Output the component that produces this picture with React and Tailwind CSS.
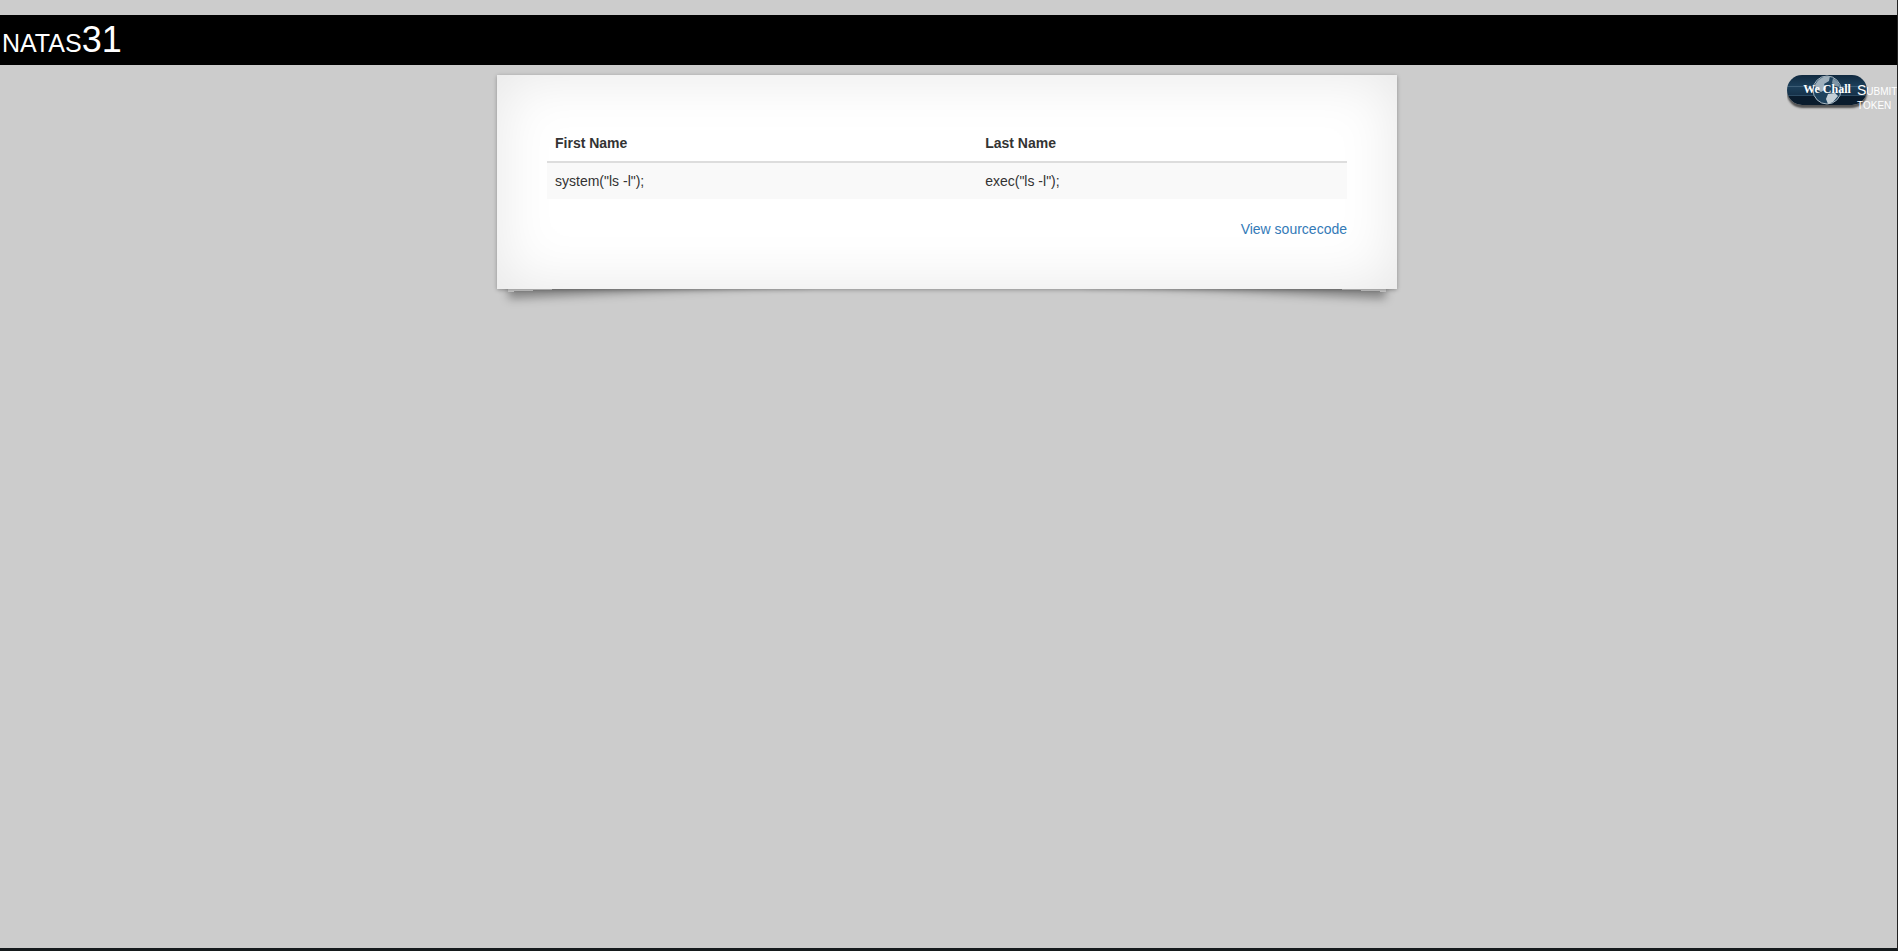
export default function App() {
  return (
    <div className="isolate relative flex h-[951px] flex-col overflow-hidden border-r border-b-[3px] border-r-[#222222] border-b-[#151a1c] bg-[#cccccc] pt-[15px] font-['Liberation_Sans',Arial,sans-serif] text-sm leading-5 text-[#333333]">
      <h1 className="h-[50px] bg-black pl-[2px] text-[36px] leading-[50px] font-normal text-white [font-variant:small-caps]">natas31</h1>

      <main className="flex justify-center pt-[10px] pr-[3px]">
        <div className="relative w-[900px] bg-white p-[50px] shadow-[0_1px_4px_rgba(0,0,0,0.3),inset_0_0_60px_rgba(0,0,0,0.1)]">
          {/* lifted corners */}
          <div className="absolute bottom-[5px] left-[10px] -z-10 h-[20%] w-1/2 max-w-[300px] -rotate-3 shadow-[0_7px_10px_rgba(0,0,0,0.35)]"></div>
          <div className="absolute right-[10px] bottom-[5px] -z-10 h-[20%] w-1/2 max-w-[300px] rotate-3 shadow-[0_7px_10px_rgba(0,0,0,0.35)]"></div>

          <table className="mb-5 w-full border-collapse">
            <thead>
              <tr className="border-b-2 border-[#dddddd]">
                <th className="p-2 text-left font-bold">First Name</th>
                <th className="p-2 text-left font-bold">Last Name</th>
              </tr>
            </thead>
            <tbody>
              <tr className="bg-[#f9f9f9]">
                <td className="p-2">system("ls -l");</td>
                <td className="p-2">exec("ls -l");</td>
              </tr>
            </tbody>
          </table>
          <div className="text-right">
            <a href="#" className="text-[#337ab7]">View sourcecode</a>
          </div>
        </div>
      </main>

      {/* wechall badge */}
      <div className="absolute top-[75px] right-0 flex h-[40px] w-[110px] items-start overflow-hidden">
        <div className="relative flex h-[30px] w-[80px] shrink-0 items-center justify-center overflow-hidden rounded-[15px] bg-[linear-gradient(to_bottom,#10293f_0,#1c3f5a_11px,#3d5d76_11px,#3d5d76_12px,#1c3f5a_12px,#16324a_20px,#2d4c64_20px,#2d4c64_21px,#0a1c2d_21px,#0a1c2d_100%)] pb-[2px] shadow-[0_3px_2px_rgba(60,60,60,0.85)]">
          <svg className="absolute inset-0 m-auto" width="32" height="30" viewBox="0 0 32 30">
            <circle cx="16" cy="15" r="14" fill="#1f435e" stroke="#aab8c2" strokeWidth="1" />
            <path d="M4 10 C7 4 12 1 19 1 L18 6 L13 9 L15 14 L10 17 L5 14 Z" fill="#9fb0bc" />
            <path d="M17 19 L24 18 L27 21 L22 27 L17 29 L15 24 Z" fill="#c5d0d7" />
            <path d="M22 3 L27 7 L29 12 L24 11 L21 8 Z" fill="#7d95a6" />
          </svg>
          <span className="relative font-['Liberation_Serif',serif] text-[12px] leading-none font-bold whitespace-nowrap text-white">We Chall</span>
        </div>
        <div className="relative mt-[8px] -ml-[10px] text-[10px] leading-[14px] whitespace-nowrap text-white">
          <div><span className="text-[14px]">S</span>UBMIT</div>
          <div>TOKEN</div>
        </div>
      </div>
    </div>
  );
}
